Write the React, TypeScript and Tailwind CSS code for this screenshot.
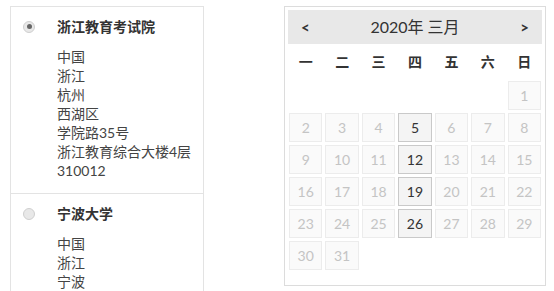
import React from 'react';

const addresses = [
  {
    name: '浙江教育考试院',
    lines: ['中国', '浙江', '杭州', '西湖区', '学院路35号', '浙江教育综合大楼4层', '310012'],
    checked: true,
  },
  {
    name: '宁波大学',
    lines: ['中国', '浙江', '宁波'],
    checked: false,
  },
];

const weekDays = ['一', '二', '三', '四', '五', '六', '日'];

export default function App() {
  // March 2020 starts on Sunday: six blanks first
  const cells: (number | null)[] = [...Array(6).fill(null), ...Array.from({ length: 31 }, (_, i) => i + 1)];

  return (
    <div
      className="w-[554px] h-[291px] overflow-hidden bg-white flex items-start text-[#333]"
      style={{ fontFamily: 'Lato, "Noto Sans CJK SC", sans-serif' }}
    >
      <div className="ml-[10px] mt-[6px] w-[194px] border border-[#e3e3e3] border-b-0">
        {addresses.map((addr, i) => (
          <div
            key={addr.name}
            className={`flex pl-[12px] pt-[10px] pb-[13px] ${i > 0 ? 'border-t border-[#e3e3e3]' : ''}`}
          >
            <div className="w-[34px] h-[19px] flex items-center">
              <span className="w-[12px] h-[12px] rounded-full border border-[#cfcfcf] bg-[#e8e8e8] flex items-center justify-center">
                {addr.checked && <span className="w-[5px] h-[5px] rounded-full bg-[#666]" />}
              </span>
            </div>
            <div>
              <div className="text-[14px] leading-[19px] font-bold text-[#333]">{addr.name}</div>
              <div className="mt-[11px] text-[14px] leading-[19px] text-[#444]">
                {addr.lines.map((l) => (
                  <div key={l}>{l}</div>
                ))}
              </div>
            </div>
          </div>
        ))}
      </div>

      <div className="ml-[80px] mt-[6px] w-[262px] h-[280px] border border-[#dcdcdc] p-[3px]">
        <div className="h-[34px] bg-[#e8e8e8] flex items-center justify-between px-[13px] text-[#333]">
          <span className="text-[15px] font-bold">&lt;</span>
          <span className="text-[16px]">2020年 三月</span>
          <span className="text-[15px] font-bold">&gt;</span>
        </div>
        <div className="grid grid-cols-7 gap-[3px] px-[1px]">
          {weekDays.map((d) => (
            <div key={d} className="h-[34px] flex items-center justify-center text-[14px] font-bold text-[#333]">
              {d}
            </div>
          ))}
        </div>
        <div className="grid grid-cols-7 gap-[3px] px-[1px] mt-[3px]">
          {cells.map((c, i) =>
            c === null ? (
              <div key={i} className="h-[29px]" />
            ) : (i % 7) === 3 ? (
              <div
                key={i}
                className="h-[29px] flex items-center justify-center border border-[#c9c9c9] bg-[#f4f4f4] text-[14px] text-[#333]"
              >
                {c}
              </div>
            ) : (
              <div
                key={i}
                className="h-[29px] flex items-center justify-center border border-[#ececec] bg-[#fafafa] text-[14px] text-[#c4c4c4]"
              >
                {c}
              </div>
            )
          )}
        </div>
      </div>
    </div>
  );
}
